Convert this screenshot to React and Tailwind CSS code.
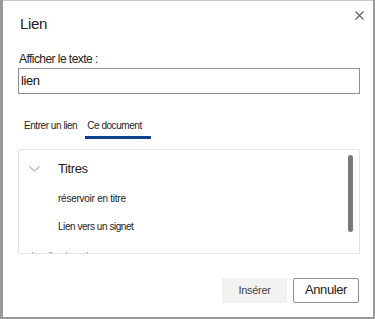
import React from "react";

const font = { fontFamily: '"Liberation Sans", Arial, sans-serif' };

export default function App() {
  return (
    <div className="w-[375px] h-[319px] bg-[#9a9a9a] flex overflow-hidden" style={font}>
      <div className="ml-[3px] mr-[2px] mb-[2px] flex-1 bg-white border-t border-[#c8c8c8] flex flex-col relative">
        <button className="absolute right-[8px] top-[8px] w-[12px] h-[12px] flex items-center justify-center text-[#555]">
          <svg width="9" height="9" viewBox="0 0 9 9" fill="none" stroke="#5a5a5a" strokeWidth="1.1">
            <path d="M0.5 0.5 L8.5 8.5 M8.5 0.5 L0.5 8.5" />
          </svg>
        </button>
        <div className="pl-[17px] pt-[14px] text-[15px] leading-[18px] text-[#222] tracking-[-0.3px]">Lien</div>
        <div className="pl-[16px] pt-[19px] text-[12px] leading-[14px] text-[#222] tracking-[-0.55px]">Afficher le texte :</div>
        <div className="ml-[15px] mr-[13px] mt-[2px] h-[26px] border border-[#8f8f8f] flex items-center pl-[2px] text-[13px] text-[#111] tracking-[-0.4px]">lien</div>
        <div className="flex pl-[21px] mt-[25px] gap-[9px] text-[10px] leading-[12px] text-[#222] tracking-[-0.45px]">
          <div className="pt-[1px]">Entrer un lien</div>
          <div className="flex flex-col">
            <div className="pt-[1px] pl-[1px]">Ce document</div>
            <div className="mt-[4px] h-[2.5px] w-[66px] -ml-[1px] bg-[#0f3f8f]" />
          </div>
        </div>
        <div className="ml-[15px] mr-[13px] mt-[10px] h-[105px] border border-[#e4e4e4] rounded-[2px] relative overflow-hidden">
          <div className="absolute right-[6px] top-[5px] w-[5px] h-[77px] rounded-full bg-[#7a7a7a]" />
          <div className="flex items-center h-[20px] mt-[9px]">
            <div className="w-[39px] pl-[10px] flex items-center">
              <svg width="11" height="6" viewBox="0 0 11 6" fill="none" stroke="#8a8a8a" strokeWidth="1">
                <path d="M0.5 0.5 L5.5 5 L10.5 0.5" />
              </svg>
            </div>
            <div className="text-[13px] text-[#222] tracking-[-0.4px]">Titres</div>
          </div>
          <div className="pl-[39px] mt-[10px] h-[20px] flex items-center text-[10px] text-[#222] tracking-[-0.25px]">réservoir en titre</div>
          <div className="pl-[39px] mt-[8px] h-[20px] flex items-center text-[10px] text-[#222] tracking-[-0.45px]">Lien vers un signet</div>
          <div className="absolute left-[13px] bottom-0 flex items-end gap-[10px] h-[2px]">
            <span className="w-[1px] h-[1px] bg-[#999]" />
            <span className="w-[3px] h-[1px] bg-[#aaa] ml-[6px]" />
            <span className="w-[1px] h-[1px] bg-[#999] ml-[4px]" />
            <span className="w-[1px] h-[1px] bg-[#999] ml-[10px]" />
          </div>
        </div>
        <div className="flex justify-end gap-[6px] mr-[14px] mt-[24px]">
          <button className="w-[65px] h-[25px] bg-[#f3f2f1] text-[11px] text-[#444] tracking-[-0.3px] flex items-center justify-center pt-[1px]">Insérer</button>
          <button className="w-[66px] h-[25px] border border-[#8f8f8f] rounded-[2px] text-[13px] text-[#222] tracking-[-0.4px] flex items-center justify-center">Annuler</button>
        </div>
      </div>
    </div>
  );
}
